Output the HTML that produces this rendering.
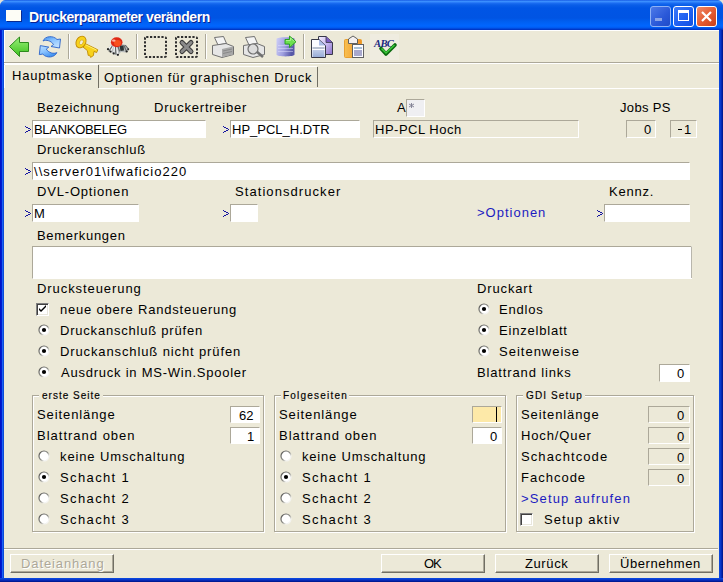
<!DOCTYPE html>
<html><head><meta charset="utf-8"><style>
html,body{margin:0;padding:0;width:723px;height:582px;overflow:hidden;background:#0831d9}
.win{position:absolute;left:0;top:0;width:723px;height:582px;overflow:hidden}
.t{position:absolute;font-family:"Liberation Sans",sans-serif;white-space:pre}
.inp{position:absolute;box-sizing:border-box}
.ico{position:absolute}
.grp{position:absolute;box-sizing:border-box}
.gbg{position:absolute;background:#ECE9D8}
.btn{position:absolute;box-sizing:border-box;background:#ece9d8;border-top:1px solid #fff;border-left:1px solid #fff;border-right:1px solid #716f64;border-bottom:1px solid #716f64;box-shadow:inset -1px -1px 0 #aca899}
</style></head><body><div class="win">
<div style="position:absolute;left:0;top:0;width:723px;height:30px;background:linear-gradient(#0a46dc 0px,#3d95ff 1px,#3788fd 2px,#1c6ef2 3px,#0a5ee8 5px,#0055e5 8px,#0054e3 18px,#0060f2 22px,#0066ff 26px,#0058ee 28px,#003dcf 29px,#0031bd 30px)"></div>
<div style="position:absolute;left:0;top:30px;width:4px;height:552px;background:linear-gradient(90deg,#0014c8 0px,#0014c8 1px,#001cd0 1px,#001cd0 2px,#1a62f4 2px,#1a62f4 3px,#0c4ad8 3px)"></div>
<div style="position:absolute;left:4px;top:88px;width:1px;height:490px;background:#dfe6f6"></div>
<div style="position:absolute;left:719px;top:30px;width:4px;height:552px;background:linear-gradient(90deg,#0a46dc 0px,#0a46dc 1px,#0838cc 1px,#0838cc 2px,#0628b4 2px,#0628b4 3px,#001a94 3px)"></div>
<div style="position:absolute;left:0;top:578px;width:723px;height:4px;background:linear-gradient(#0a46dc 0px,#0a46dc 1px,#0838cc 1px,#0838cc 2px,#0628b4 2px,#0628b4 3px,#001a94 3px)"></div>
<div style="position:absolute;left:718px;top:30px;width:1px;height:548px;background:#d8e0f0"></div>
<div style="position:absolute;left:4px;top:577px;width:715px;height:1px;background:#d8e0f0"></div>
<div style="position:absolute;left:4px;top:30px;width:715px;height:548px;background:#ECE9D8"></div>
<!-- rounded top corners -->
<svg class="ico" style="left:0;top:0" width="6" height="6" viewBox="0 0 6 6"><path d="M0,0 H5 C2.5,0.3 0.3,2.5 0,5 Z" fill="#e4e2d8"/></svg>
<svg class="ico" style="left:717px;top:0" width="6" height="6" viewBox="0 0 6 6"><path d="M6,0 H1 C3.5,0.3 5.7,2.5 6,5 Z" fill="#e4e2d8"/></svg>
<!-- title icon -->
<div style="position:absolute;left:6px;top:10px;width:15px;height:11px;background:#fdfdf6;box-shadow:1px 1px 0 #0a2a90"></div>
<!-- title buttons -->
<div style="position:absolute;left:650px;top:6px;width:21px;height:21px;box-sizing:border-box;border:1px solid #8fb2f6;border-radius:3px;background:linear-gradient(135deg,#4d7ae8,#2a58d8 60%,#1f4bc8)"></div>
<div style="position:absolute;left:655px;top:18px;width:7px;height:3px;background:#8aa4e8"></div>
<div style="position:absolute;left:673px;top:6px;width:21px;height:21px;box-sizing:border-box;border:1px solid #fff;border-radius:3px;background:linear-gradient(135deg,#3c7af8,#1d5ef0 60%,#1050e0)"></div>
<div style="position:absolute;left:678px;top:10px;width:11px;height:11px;box-sizing:border-box;border:1px solid #fff;border-top:3px solid #fff"></div>
<div style="position:absolute;left:696px;top:6px;width:21px;height:21px;box-sizing:border-box;border:1px solid #fff;border-radius:3px;background:linear-gradient(135deg,#f08a68,#e35a30 55%,#c8401a)"></div>
<svg style="position:absolute;left:696px;top:6px" width="21" height="21" viewBox="0 0 21 21"><path d="M6,6 L15,15 M15,6 L6,15" stroke="#fff" stroke-width="2.2"/></svg>
<!-- toolbar -->
<div style="position:absolute;left:4px;top:30px;width:715px;height:1px;background:#fff"></div>
<div style="position:absolute;left:4px;top:30px;width:1px;height:32px;background:#fff"></div>
<div style="position:absolute;left:4px;top:62px;width:715px;height:1px;background:#aca899"></div>
<div style="position:absolute;left:4px;top:63px;width:715px;height:1px;background:#fff"></div>
<div style="position:absolute;left:68px;top:34px;width:1px;height:25px;background:#aca899"></div>
<div style="position:absolute;left:69px;top:34px;width:1px;height:25px;background:#fff"></div>
<div style="position:absolute;left:136px;top:34px;width:1px;height:25px;background:#aca899"></div>
<div style="position:absolute;left:137px;top:34px;width:1px;height:25px;background:#fff"></div>
<div style="position:absolute;left:205px;top:34px;width:1px;height:25px;background:#aca899"></div>
<div style="position:absolute;left:206px;top:34px;width:1px;height:25px;background:#fff"></div>
<div style="position:absolute;left:303px;top:34px;width:1px;height:25px;background:#aca899"></div>
<div style="position:absolute;left:304px;top:34px;width:1px;height:25px;background:#fff"></div>
<!-- back arrow -->
<svg class="ico" style="left:8px;top:36px" width="22" height="22" viewBox="0 0 22 22">
<defs><linearGradient id="ga" x1="0" y1="0" x2="0" y2="1"><stop offset="0" stop-color="#9af07a"/><stop offset="1" stop-color="#3cc01c"/></linearGradient></defs>
<path d="M1.5,10.5 L11.5,1 V6.5 H20.5 V15.5 H11.5 V20.5 Z" fill="url(#ga)" stroke="#2e8a1e" stroke-width="1"/></svg>
<!-- refresh -->
<svg class="ico" style="left:36px;top:34px" width="28" height="26" viewBox="0 0 28 26">
<defs><linearGradient id="gb" x1="0" y1="0" x2="0.6" y2="1"><stop offset="0" stop-color="#3b8ef0"/><stop offset="0.5" stop-color="#8cc4ff"/><stop offset="1" stop-color="#bfe0ff"/></linearGradient>
<linearGradient id="gb2" x1="0" y1="0" x2="0.6" y2="1"><stop offset="0" stop-color="#bfe0ff"/><stop offset="0.5" stop-color="#8cc4ff"/><stop offset="1" stop-color="#3b8ef0"/></linearGradient></defs>
<path d="M7,7 C9,2 17,1 21,5.5 L24.5,5 L23.5,14 L15,12.5 L17.5,10.5 C15,6.5 10,5.5 7,7 Z" fill="url(#gb)" stroke="#2a62c8" stroke-width="0.9" stroke-linejoin="round"/>
<path d="M20.8,18.6 C18.8,23.6 10.8,24.6 6.8,20.1 L3.3,20.6 L4.3,11.6 L12.8,13.1 L10.3,15.1 C12.8,19.1 17.8,20.1 20.8,18.6 Z" fill="url(#gb2)" stroke="#2a62c8" stroke-width="0.9" stroke-linejoin="round"/></svg>
<!-- key -->
<svg class="ico" style="left:72px;top:33px" width="28" height="27" viewBox="0 0 28 27">
<path d="M12,10 L25.8,16.8 L24.6,19.6 L22,18.4 L21.4,22.6 L18.6,24.4 L17.6,22.2 L16.2,22.4 L15.4,17.6 L11,14 Z" fill="#f8d21c" stroke="#c08a00" stroke-width="0.9" stroke-linejoin="round"/>
<path d="M13,11.5 L24.5,17" stroke="#fff27a" stroke-width="0.9"/>
<ellipse cx="9" cy="9" rx="4.7" ry="6.2" transform="rotate(28 9 9)" fill="#f8d21c" stroke="#c08a00" stroke-width="0.9"/>
<ellipse cx="9.4" cy="9.3" rx="1.7" ry="2.6" transform="rotate(28 9.4 9.3)" fill="#f2eed8" stroke="#d0a010" stroke-width="0.6"/></svg>
<!-- spider -->
<svg class="ico" style="left:104px;top:33px" width="28" height="27" viewBox="0 0 28 27">
<path d="M6,13 C4,15 3.5,16 4,17 L7,19 L9,21 L13.5,22.5 L17,19 L22,19.5 L25,17 L22,12 L18,11 L9,11 Z" fill="#b8bcbc"/>
<path d="M7,13 L4,16.5 M9,13 L6.5,18.5 M10.5,13.5 L9.8,20.5 M12.5,14 L13.8,22" stroke="#f4f4f4" stroke-width="1.3" stroke-linecap="round"/>
<path d="M8,13.5 L5,18 M11.5,14 L11.8,21 M14,13.5 L15.5,18 M20,12.5 L22.5,18.5 M21.5,12.5 L24.5,16" stroke="#606666" stroke-width="1.1" stroke-linecap="round"/>
<path d="M15.5,12.5 L19.5,12.5 L20,17.5 L16.5,18 Z" fill="#2c3434"/>
<circle cx="4" cy="16.2" r="1.1" fill="#202020"/><circle cx="6.5" cy="18.6" r="1.1" fill="#202020"/><circle cx="9.7" cy="20.4" r="1.1" fill="#202020"/><circle cx="13.9" cy="21.8" r="1.1" fill="#202020"/><circle cx="22.7" cy="18.5" r="1.1" fill="#202020"/><circle cx="24.2" cy="16.2" r="1" fill="#303030"/>
<ellipse cx="12.7" cy="9.3" rx="5.8" ry="5" fill="#e02814"/>
<ellipse cx="13.5" cy="10" rx="3.6" ry="3.1" fill="#ff5a1e" opacity="0.8"/>
<ellipse cx="9.8" cy="7.6" rx="1.8" ry="1.2" fill="#ffc0b0" opacity="0.9"/></svg>
<!-- dotted squares -->
<svg class="ico" style="left:143px;top:35px" width="25" height="24" viewBox="0 0 25 24"><rect x="2" y="2" width="21" height="20" rx="1.2" fill="none" stroke="#303030" stroke-width="2" stroke-dasharray="2.2 1.6"/></svg>
<svg class="ico" style="left:174px;top:35px" width="25" height="24" viewBox="0 0 25 24"><rect x="2" y="2" width="21" height="20" rx="1.2" fill="none" stroke="#303030" stroke-width="2" stroke-dasharray="2.2 1.6"/>
<path d="M8,7.5 L17,16.5 M17,7.5 L8,16.5" stroke="#3a3a3a" stroke-width="5" stroke-linecap="round"/><path d="M8,7.5 L17,16.5 M17,7.5 L8,16.5" stroke="#8a8a8a" stroke-width="3" stroke-linecap="round"/></svg>
<!-- printer -->
<svg class="ico" style="left:211px;top:35px" width="24" height="24" viewBox="0 0 24 24">
<path d="M3.5,2.5 L12.5,1.5 L15.5,8.5 L7,10 Z" fill="#f4f4f4" stroke="#707070" stroke-width="1"/>
<path d="M1.5,10.5 L15,8.5 L22.5,11.5 L22.5,19.5 L11,22.5 L1.5,19.5 Z" fill="#e6e6e6" stroke="#707070" stroke-width="1"/>
<path d="M11,14 L22,11.5 L22,19.5 L11,22 Z" fill="#a8a8a8"/><path d="M12,16 L21,14 M12,18.5 L21,16.5" stroke="#808080" stroke-width="0.8"/></svg>
<!-- printer preview -->
<svg class="ico" style="left:242px;top:35px" width="24" height="24" viewBox="0 0 24 24">
<path d="M3.5,2.5 L12.5,1.5 L15.5,8.5 L7,10 Z" fill="#f4f4f4" stroke="#707070" stroke-width="1"/>
<path d="M1.5,10.5 L15,8.5 L22.5,11.5 L22.5,19.5 L11,22.5 L1.5,19.5 Z" fill="#e6e6e6" stroke="#707070" stroke-width="1"/>
<path d="M14,16 L21,22" stroke="#707070" stroke-width="2.5"/>
<circle cx="11" cy="14" r="5" fill="#dcdcdc" stroke="#707070" stroke-width="1.2"/></svg>
<!-- database -->
<svg class="ico" style="left:275px;top:35px" width="23" height="23" viewBox="0 0 23 23">
<defs><linearGradient id="gd" x1="0" y1="0" x2="1" y2="0.3"><stop offset="0" stop-color="#d0d0f8"/><stop offset="0.55" stop-color="#a0a0e0"/><stop offset="1" stop-color="#5858a8"/></linearGradient></defs>
<path d="M1.5,4 C1.5,1.8 19.5,1.8 19.5,4 V19.5 C19.5,22 1.5,22 1.5,19.5 Z" fill="url(#gd)"/>
<path d="M3,10.5 H18 M3,13.5 H18 M3,16.5 H18" stroke="#e4e4ff" stroke-width="0.8" opacity="0.6"/>
<path d="M10,4.5 H14.5 V1 L21,6.8 L14.5,12.6 V9 H10 Z" fill="#6ee050" stroke="#24a018" stroke-width="0.9" stroke-linejoin="round"/>
<path d="M11,5.5 H15.5 V3 L19.5,6.5" stroke="#b8f8a0" stroke-width="0.8" fill="none"/></svg>
<!-- copy -->
<svg class="ico" style="left:305px;top:33px" width="32" height="27" viewBox="0 0 32 27">
<defs><linearGradient id="gc1" x1="0" y1="0" x2="1" y2="1"><stop offset="0" stop-color="#f4f0ff"/><stop offset="0.5" stop-color="#c8b8f0"/><stop offset="1" stop-color="#8a70c8"/></linearGradient>
<linearGradient id="gc2" x1="0" y1="0" x2="0" y2="1"><stop offset="0" stop-color="#c0cce8"/><stop offset="1" stop-color="#98acd8"/></linearGradient></defs>
<path d="M13.5,3.5 H21 L27.5,9.5 V21.5 H13.5 Z" fill="url(#gc1)" stroke="#383848" stroke-width="1"/>
<path d="M21,3.5 V9.5 H27.5" fill="#7a5cc0" stroke="#383848" stroke-width="0.8"/>
<path d="M6.5,6.5 H14 L20.5,12.5 V24.5 H6.5 Z" fill="#fbfbff" stroke="#383848" stroke-width="1"/>
<rect x="7.5" y="14" width="12" height="2" fill="#b8c0d0"/>
<rect x="7.5" y="17" width="12" height="7" fill="url(#gc2)"/>
<path d="M14,6.5 L20.5,12.5 L14,12.5 Z" fill="#9aaee0" opacity="0.8"/></svg>
<!-- paste -->
<svg class="ico" style="left:338px;top:33px" width="32" height="27" viewBox="0 0 32 27">
<defs><linearGradient id="gp" x1="0" y1="0" x2="1" y2="0"><stop offset="0" stop-color="#f8c050"/><stop offset="1" stop-color="#f09020"/></linearGradient></defs>
<rect x="6.5" y="6.5" width="17" height="18" rx="1" fill="url(#gp)" stroke="#e8a030" stroke-width="1"/>
<path d="M10.5,10.5 V6 L15,3 L19.5,6 V10.5 Z" fill="#f4f0f0" stroke="#606060" stroke-width="1" stroke-linejoin="round"/>
<rect x="14.5" y="11.5" width="11" height="13" fill="#fcfcff" stroke="#606060" stroke-width="1"/>
<rect x="16" y="14" width="8" height="2" fill="#a8c0d8"/>
<rect x="16" y="17" width="8" height="6" fill="#a8a8cc"/></svg>
<!-- abc -->
<div style="position:absolute;left:370px;top:34px;width:29px;height:26px;background:#efece0"></div>
<div style="position:absolute;left:374px;top:38px;font-family:'Liberation Serif',serif;font-weight:bold;font-style:italic;font-size:10.5px;line-height:11px;color:#1c2a80;letter-spacing:-0.6px">ABC</div>
<svg class="ico" style="left:378px;top:42px" width="20" height="16" viewBox="0 0 20 16"><path d="M3,6.5 L8,12 L17,3" stroke="#0c6c10" stroke-width="3.6" fill="none" stroke-linejoin="round" stroke-linecap="round"/><path d="M3.5,6.5 L8,11 L16.5,3" stroke="#3cc83c" stroke-width="1.6" fill="none"/></svg>
<!-- tabs -->
<div style="position:absolute;left:4px;top:88px;width:715px;height:1px;background:#fff"></div>
<div style="position:absolute;left:99px;top:66px;width:219px;height:22px;background:#ECE9D8"></div>
<div style="position:absolute;left:100px;top:66px;width:217px;height:1px;background:#fff"></div>
<div style="position:absolute;left:317px;top:67px;width:1px;height:20px;background:#716f64"></div>
<div style="position:absolute;left:4px;top:64px;width:95px;height:25px;background:#ECE9D8"></div>
<div style="position:absolute;left:5px;top:64px;width:93px;height:1px;background:#fff"></div>
<div style="position:absolute;left:4px;top:65px;width:1px;height:23px;background:#fff"></div>
<div style="position:absolute;left:98px;top:65px;width:1px;height:23px;background:#716f64"></div>

<svg class="ico" style="left:25px;top:126px" width="6" height="7" viewBox="0 0 6 7" shape-rendering="crispEdges"><path d="M0,0h1v1h-1z M1,1h2v1h-2z M3,2h2v1h-2z M5,3h1v1h-1z M3,4h2v1h-2z M1,5h2v1h-2z M0,6h1v1h-1z" fill="#1414a0"/></svg><div class="inp" style="left:32px;top:120px;width:174px;height:18px;background:#fff;border-top:1px solid #aca899;border-left:1px solid #aca899;border-right:1px solid #fff;border-bottom:1px solid #fff"></div><svg class="ico" style="left:223px;top:126px" width="6" height="7" viewBox="0 0 6 7" shape-rendering="crispEdges"><path d="M0,0h1v1h-1z M1,1h2v1h-2z M3,2h2v1h-2z M5,3h1v1h-1z M3,4h2v1h-2z M1,5h2v1h-2z M0,6h1v1h-1z" fill="#1414a0"/></svg><div class="inp" style="left:230px;top:120px;width:130px;height:18px;background:#fff;border-top:1px solid #aca899;border-left:1px solid #aca899;border-right:1px solid #fff;border-bottom:1px solid #fff"></div><div class="inp" style="left:406px;top:99px;width:19px;height:18px;background:#efeff2;border-top:1px solid #aca899;border-left:1px solid #aca899;border-right:1px solid #fff;border-bottom:1px solid #fff"></div><svg class="ico" style="left:409px;top:103px" width="5" height="5" viewBox="0 0 5 5"><path d="M2.5,0 V5 M0,1 L5,4 M0,4 L5,1" stroke="#7c7c90" stroke-width="0.9"/></svg><div class="inp" style="left:373px;top:120px;width:206px;height:18px;background:#ECE9D8;border-top:1px solid #aca899;border-left:1px solid #aca899;border-right:1px solid #fff;border-bottom:1px solid #fff"></div><div class="inp" style="left:626px;top:120px;width:30px;height:18px;background:#ECE9D8;border-top:1px solid #aca899;border-left:1px solid #aca899;border-right:1px solid #fff;border-bottom:1px solid #fff"></div><div class="inp" style="left:670px;top:120px;width:27px;height:18px;background:#ECE9D8;border-top:1px solid #aca899;border-left:1px solid #aca899;border-right:1px solid #fff;border-bottom:1px solid #fff"></div><div style="position:absolute;left:678px;top:129px;width:4px;height:1px;background:#000"></div><svg class="ico" style="left:25px;top:168px" width="6" height="7" viewBox="0 0 6 7" shape-rendering="crispEdges"><path d="M0,0h1v1h-1z M1,1h2v1h-2z M3,2h2v1h-2z M5,3h1v1h-1z M3,4h2v1h-2z M1,5h2v1h-2z M0,6h1v1h-1z" fill="#1414a0"/></svg><div class="inp" style="left:32px;top:162px;width:658px;height:18px;background:#fff;border-top:1px solid #aca899;border-left:1px solid #aca899;border-right:1px solid #fff;border-bottom:1px solid #fff"></div><svg class="ico" style="left:25px;top:210px" width="6" height="7" viewBox="0 0 6 7" shape-rendering="crispEdges"><path d="M0,0h1v1h-1z M1,1h2v1h-2z M3,2h2v1h-2z M5,3h1v1h-1z M3,4h2v1h-2z M1,5h2v1h-2z M0,6h1v1h-1z" fill="#1414a0"/></svg><div class="inp" style="left:32px;top:204px;width:107px;height:18px;background:#fff;border-top:1px solid #aca899;border-left:1px solid #aca899;border-right:1px solid #fff;border-bottom:1px solid #fff"></div><svg class="ico" style="left:223px;top:210px" width="6" height="7" viewBox="0 0 6 7" shape-rendering="crispEdges"><path d="M0,0h1v1h-1z M1,1h2v1h-2z M3,2h2v1h-2z M5,3h1v1h-1z M3,4h2v1h-2z M1,5h2v1h-2z M0,6h1v1h-1z" fill="#1414a0"/></svg><div class="inp" style="left:230px;top:204px;width:28px;height:18px;background:#fff;border-top:1px solid #aca899;border-left:1px solid #aca899;border-right:1px solid #fff;border-bottom:1px solid #fff"></div><svg class="ico" style="left:597px;top:210px" width="6" height="7" viewBox="0 0 6 7" shape-rendering="crispEdges"><path d="M0,0h1v1h-1z M1,1h2v1h-2z M3,2h2v1h-2z M5,3h1v1h-1z M3,4h2v1h-2z M1,5h2v1h-2z M0,6h1v1h-1z" fill="#1414a0"/></svg><div class="inp" style="left:604px;top:204px;width:86px;height:18px;background:#fff;border-top:1px solid #aca899;border-left:1px solid #aca899;border-right:1px solid #fff;border-bottom:1px solid #fff"></div><div class="inp" style="left:32px;top:246px;width:660px;height:33px;background:#fff;border-top:1px solid #aca899;border-left:1px solid #aca899;border-right:1px solid #fff;border-bottom:1px solid #fff"></div><div style="position:absolute;left:691px;top:247px;width:1px;height:31px;background:#b8b6ac"></div><div class="ico" style="left:36px;top:303px;width:13px;height:13px;box-sizing:border-box;background:#fff;border-top:1px solid #808080;border-left:1px solid #808080;border-right:1px solid #fff;border-bottom:1px solid #fff;box-shadow:inset 1px 1px 0 #404040, inset -1px -1px 0 #e8e6dc"></div><svg class="ico" style="left:36px;top:303px" width="13" height="13" viewBox="0 0 13 13"><path d="M3,5 L3,7 L5,9 L10,4 L10,2 L5,7 Z" fill="#000"/></svg><svg class="ico" style="left:38px;top:324px" width="12" height="12" viewBox="0 0 12 12"><defs><linearGradient id="rg38_324" x1="0" y1="0" x2="1" y2="1"><stop offset="0" stop-color="#4a4a4a"/><stop offset="0.5" stop-color="#8c8c86"/><stop offset="0.72" stop-color="#f0f0ec"/><stop offset="1" stop-color="#ffffff"/></linearGradient></defs><circle cx="6" cy="6" r="5.6" fill="url(#rg38_324)"/><circle cx="6" cy="6" r="4.4" fill="#fff"/><circle cx="6" cy="6" r="2.1" fill="#000"/></svg><svg class="ico" style="left:38px;top:345px" width="12" height="12" viewBox="0 0 12 12"><defs><linearGradient id="rg38_345" x1="0" y1="0" x2="1" y2="1"><stop offset="0" stop-color="#4a4a4a"/><stop offset="0.5" stop-color="#8c8c86"/><stop offset="0.72" stop-color="#f0f0ec"/><stop offset="1" stop-color="#ffffff"/></linearGradient></defs><circle cx="6" cy="6" r="5.6" fill="url(#rg38_345)"/><circle cx="6" cy="6" r="4.4" fill="#fff"/><circle cx="6" cy="6" r="2.1" fill="#000"/></svg><svg class="ico" style="left:38px;top:366px" width="12" height="12" viewBox="0 0 12 12"><defs><linearGradient id="rg38_366" x1="0" y1="0" x2="1" y2="1"><stop offset="0" stop-color="#4a4a4a"/><stop offset="0.5" stop-color="#8c8c86"/><stop offset="0.72" stop-color="#f0f0ec"/><stop offset="1" stop-color="#ffffff"/></linearGradient></defs><circle cx="6" cy="6" r="5.6" fill="url(#rg38_366)"/><circle cx="6" cy="6" r="4.4" fill="#fff"/><circle cx="6" cy="6" r="2.1" fill="#000"/></svg><svg class="ico" style="left:478px;top:303px" width="12" height="12" viewBox="0 0 12 12"><defs><linearGradient id="rg478_303" x1="0" y1="0" x2="1" y2="1"><stop offset="0" stop-color="#4a4a4a"/><stop offset="0.5" stop-color="#8c8c86"/><stop offset="0.72" stop-color="#f0f0ec"/><stop offset="1" stop-color="#ffffff"/></linearGradient></defs><circle cx="6" cy="6" r="5.6" fill="url(#rg478_303)"/><circle cx="6" cy="6" r="4.4" fill="#fff"/><circle cx="6" cy="6" r="2.1" fill="#000"/></svg><svg class="ico" style="left:478px;top:324px" width="12" height="12" viewBox="0 0 12 12"><defs><linearGradient id="rg478_324" x1="0" y1="0" x2="1" y2="1"><stop offset="0" stop-color="#4a4a4a"/><stop offset="0.5" stop-color="#8c8c86"/><stop offset="0.72" stop-color="#f0f0ec"/><stop offset="1" stop-color="#ffffff"/></linearGradient></defs><circle cx="6" cy="6" r="5.6" fill="url(#rg478_324)"/><circle cx="6" cy="6" r="4.4" fill="#fff"/><circle cx="6" cy="6" r="2.1" fill="#000"/></svg><svg class="ico" style="left:478px;top:345px" width="12" height="12" viewBox="0 0 12 12"><defs><linearGradient id="rg478_345" x1="0" y1="0" x2="1" y2="1"><stop offset="0" stop-color="#4a4a4a"/><stop offset="0.5" stop-color="#8c8c86"/><stop offset="0.72" stop-color="#f0f0ec"/><stop offset="1" stop-color="#ffffff"/></linearGradient></defs><circle cx="6" cy="6" r="5.6" fill="url(#rg478_345)"/><circle cx="6" cy="6" r="4.4" fill="#fff"/><circle cx="6" cy="6" r="2.1" fill="#000"/></svg><div class="inp" style="left:659px;top:364px;width:31px;height:18px;background:#fff;border-top:1px solid #aca899;border-left:1px solid #aca899;border-right:1px solid #fff;border-bottom:1px solid #fff"></div><div class="grp" style="left:33px;top:396px;width:232px;height:137px;border:1px solid #fff"></div><div class="grp" style="left:32px;top:395px;width:232px;height:137px;border:1px solid #aca899"></div><div class="gbg" style="left:39px;top:391px;width:64px;height:8px"></div><div class="grp" style="left:275px;top:396px;width:232px;height:137px;border:1px solid #fff"></div><div class="grp" style="left:274px;top:395px;width:232px;height:137px;border:1px solid #aca899"></div><div class="gbg" style="left:281px;top:391px;width:68px;height:8px"></div><div class="grp" style="left:517px;top:396px;width:178px;height:137px;border:1px solid #fff"></div><div class="grp" style="left:516px;top:395px;width:178px;height:137px;border:1px solid #aca899"></div><div class="gbg" style="left:523px;top:391px;width:62px;height:8px"></div><div class="inp" style="left:230px;top:406px;width:30px;height:17px;background:#fff;border-top:1px solid #aca899;border-left:1px solid #aca899;border-right:1px solid #fff;border-bottom:1px solid #fff"></div><div class="inp" style="left:230px;top:427px;width:30px;height:17px;background:#fff;border-top:1px solid #aca899;border-left:1px solid #aca899;border-right:1px solid #fff;border-bottom:1px solid #fff"></div><svg class="ico" style="left:38px;top:450px" width="12" height="12" viewBox="0 0 12 12"><defs><linearGradient id="rg38_450" x1="0" y1="0" x2="1" y2="1"><stop offset="0" stop-color="#4a4a4a"/><stop offset="0.5" stop-color="#8c8c86"/><stop offset="0.72" stop-color="#f0f0ec"/><stop offset="1" stop-color="#ffffff"/></linearGradient></defs><circle cx="6" cy="6" r="5.6" fill="url(#rg38_450)"/><circle cx="6" cy="6" r="4.4" fill="#fff"/></svg><svg class="ico" style="left:38px;top:471px" width="12" height="12" viewBox="0 0 12 12"><defs><linearGradient id="rg38_471" x1="0" y1="0" x2="1" y2="1"><stop offset="0" stop-color="#4a4a4a"/><stop offset="0.5" stop-color="#8c8c86"/><stop offset="0.72" stop-color="#f0f0ec"/><stop offset="1" stop-color="#ffffff"/></linearGradient></defs><circle cx="6" cy="6" r="5.6" fill="url(#rg38_471)"/><circle cx="6" cy="6" r="4.4" fill="#fff"/><circle cx="6" cy="6" r="2.1" fill="#000"/></svg><svg class="ico" style="left:38px;top:492px" width="12" height="12" viewBox="0 0 12 12"><defs><linearGradient id="rg38_492" x1="0" y1="0" x2="1" y2="1"><stop offset="0" stop-color="#4a4a4a"/><stop offset="0.5" stop-color="#8c8c86"/><stop offset="0.72" stop-color="#f0f0ec"/><stop offset="1" stop-color="#ffffff"/></linearGradient></defs><circle cx="6" cy="6" r="5.6" fill="url(#rg38_492)"/><circle cx="6" cy="6" r="4.4" fill="#fff"/></svg><svg class="ico" style="left:38px;top:513px" width="12" height="12" viewBox="0 0 12 12"><defs><linearGradient id="rg38_513" x1="0" y1="0" x2="1" y2="1"><stop offset="0" stop-color="#4a4a4a"/><stop offset="0.5" stop-color="#8c8c86"/><stop offset="0.72" stop-color="#f0f0ec"/><stop offset="1" stop-color="#ffffff"/></linearGradient></defs><circle cx="6" cy="6" r="5.6" fill="url(#rg38_513)"/><circle cx="6" cy="6" r="4.4" fill="#fff"/></svg><div class="inp" style="left:472px;top:406px;width:30px;height:17px;background:#fde9a8;border-top:1px solid #aca899;border-left:1px solid #aca899;border-right:1px solid #fff;border-bottom:1px solid #fff"></div><div style="position:absolute;left:496px;top:407px;width:1px;height:15px;background:#000"></div><div class="inp" style="left:472px;top:427px;width:30px;height:17px;background:#fff;border-top:1px solid #aca899;border-left:1px solid #aca899;border-right:1px solid #fff;border-bottom:1px solid #fff"></div><svg class="ico" style="left:280px;top:450px" width="12" height="12" viewBox="0 0 12 12"><defs><linearGradient id="rg280_450" x1="0" y1="0" x2="1" y2="1"><stop offset="0" stop-color="#4a4a4a"/><stop offset="0.5" stop-color="#8c8c86"/><stop offset="0.72" stop-color="#f0f0ec"/><stop offset="1" stop-color="#ffffff"/></linearGradient></defs><circle cx="6" cy="6" r="5.6" fill="url(#rg280_450)"/><circle cx="6" cy="6" r="4.4" fill="#fff"/></svg><svg class="ico" style="left:280px;top:471px" width="12" height="12" viewBox="0 0 12 12"><defs><linearGradient id="rg280_471" x1="0" y1="0" x2="1" y2="1"><stop offset="0" stop-color="#4a4a4a"/><stop offset="0.5" stop-color="#8c8c86"/><stop offset="0.72" stop-color="#f0f0ec"/><stop offset="1" stop-color="#ffffff"/></linearGradient></defs><circle cx="6" cy="6" r="5.6" fill="url(#rg280_471)"/><circle cx="6" cy="6" r="4.4" fill="#fff"/><circle cx="6" cy="6" r="2.1" fill="#000"/></svg><svg class="ico" style="left:280px;top:492px" width="12" height="12" viewBox="0 0 12 12"><defs><linearGradient id="rg280_492" x1="0" y1="0" x2="1" y2="1"><stop offset="0" stop-color="#4a4a4a"/><stop offset="0.5" stop-color="#8c8c86"/><stop offset="0.72" stop-color="#f0f0ec"/><stop offset="1" stop-color="#ffffff"/></linearGradient></defs><circle cx="6" cy="6" r="5.6" fill="url(#rg280_492)"/><circle cx="6" cy="6" r="4.4" fill="#fff"/></svg><svg class="ico" style="left:280px;top:513px" width="12" height="12" viewBox="0 0 12 12"><defs><linearGradient id="rg280_513" x1="0" y1="0" x2="1" y2="1"><stop offset="0" stop-color="#4a4a4a"/><stop offset="0.5" stop-color="#8c8c86"/><stop offset="0.72" stop-color="#f0f0ec"/><stop offset="1" stop-color="#ffffff"/></linearGradient></defs><circle cx="6" cy="6" r="5.6" fill="url(#rg280_513)"/><circle cx="6" cy="6" r="4.4" fill="#fff"/></svg><div class="inp" style="left:648px;top:406px;width:42px;height:17px;background:#ECE9D8;border-top:1px solid #aca899;border-left:1px solid #aca899;border-right:1px solid #fff;border-bottom:1px solid #fff"></div><div class="inp" style="left:648px;top:427px;width:42px;height:17px;background:#ECE9D8;border-top:1px solid #aca899;border-left:1px solid #aca899;border-right:1px solid #fff;border-bottom:1px solid #fff"></div><div class="inp" style="left:648px;top:448px;width:42px;height:17px;background:#ECE9D8;border-top:1px solid #aca899;border-left:1px solid #aca899;border-right:1px solid #fff;border-bottom:1px solid #fff"></div><div class="inp" style="left:648px;top:469px;width:42px;height:17px;background:#ECE9D8;border-top:1px solid #aca899;border-left:1px solid #aca899;border-right:1px solid #fff;border-bottom:1px solid #fff"></div><div class="ico" style="left:520px;top:513px;width:13px;height:13px;box-sizing:border-box;background:#fff;border-top:1px solid #808080;border-left:1px solid #808080;border-right:1px solid #fff;border-bottom:1px solid #fff;box-shadow:inset 1px 1px 0 #404040, inset -1px -1px 0 #e8e6dc"></div><svg class="ico" style="left:520px;top:513px" width="13" height="13" viewBox="0 0 13 13"></svg><div style="position:absolute;left:4px;top:548px;width:714px;height:1px;background:#aca899"></div><div style="position:absolute;left:4px;top:549px;width:714px;height:1px;background:#fff"></div><div class="btn" style="left:10px;top:554px;width:104px;height:19px"></div><div class="btn" style="left:381px;top:554px;width:104px;height:19px"></div><div class="btn" style="left:495px;top:554px;width:104px;height:19px"></div><div class="btn" style="left:609px;top:554px;width:104px;height:19px"></div>
<div class="t" style="left:29px;top:9px;font-size:14px;line-height:16px;font-weight:bold;color:#fff;letter-spacing:-0.440px;text-shadow:1px 1px 0 #0a2290;">Druckerparameter verändern</div>
<div class="t" style="left:12px;top:68px;font-size:13px;line-height:15px;font-weight:normal;color:#000;letter-spacing:0.778px;">Hauptmaske</div>
<div class="t" style="left:104px;top:70px;font-size:13px;line-height:15px;font-weight:normal;color:#000;letter-spacing:0.828px;">Optionen für graphischen Druck</div>
<div class="t" style="left:37px;top:100px;font-size:13px;line-height:15px;font-weight:normal;color:#000;letter-spacing:0.700px;">Bezeichnung</div>
<div class="t" style="left:154px;top:100px;font-size:13px;line-height:15px;font-weight:normal;color:#000;letter-spacing:0.769px;">Druckertreiber</div>
<div class="t" style="left:397px;top:100px;font-size:13px;line-height:15px;font-weight:normal;color:#000;letter-spacing:0.000px;">A</div>
<div class="t" style="left:620px;top:100px;font-size:13px;line-height:15px;font-weight:normal;color:#000;letter-spacing:0.333px;">Jobs PS</div>
<div class="t" style="left:34px;top:122px;font-size:13px;line-height:15px;font-weight:normal;color:#000;letter-spacing:-0.300px;">BLANKOBELEG</div>
<div class="t" style="left:232px;top:122px;font-size:13px;line-height:15px;font-weight:normal;color:#000;letter-spacing:0.000px;">HP_PCL_H.DTR</div>
<div class="t" style="left:375px;top:122px;font-size:13px;line-height:15px;font-weight:normal;color:#000;letter-spacing:0.500px;">HP-PCL Hoch</div>
<div class="t" style="left:644px;top:122px;font-size:13px;line-height:15px;font-weight:normal;color:#000;letter-spacing:0.000px;">0</div>
<div class="t" style="left:684px;top:122px;font-size:13px;line-height:15px;font-weight:normal;color:#000;letter-spacing:0.000px;">1</div>
<div class="t" style="left:37px;top:142px;font-size:13px;line-height:15px;font-weight:normal;color:#000;letter-spacing:0.714px;">Druckeranschluß</div>
<div class="t" style="left:34px;top:164px;font-size:13px;line-height:15px;font-weight:normal;color:#000;letter-spacing:1.045px;">\\server01\ifwaficio220</div>
<div class="t" style="left:37px;top:184px;font-size:13px;line-height:15px;font-weight:normal;color:#000;letter-spacing:0.818px;">DVL-Optionen</div>
<div class="t" style="left:235px;top:184px;font-size:13px;line-height:15px;font-weight:normal;color:#000;letter-spacing:1.071px;">Stationsdrucker</div>
<div class="t" style="left:609px;top:184px;font-size:13px;line-height:15px;font-weight:normal;color:#000;letter-spacing:0.800px;">Kennz.</div>
<div class="t" style="left:34px;top:206px;font-size:13px;line-height:15px;font-weight:normal;color:#000;letter-spacing:0.000px;">M</div>
<div class="t" style="left:477px;top:205px;font-size:13px;line-height:15px;font-weight:normal;color:#1c1cc0;letter-spacing:1.000px;">&gt;Optionen</div>
<div class="t" style="left:37px;top:228px;font-size:13px;line-height:15px;font-weight:normal;color:#000;letter-spacing:0.700px;">Bemerkungen</div>
<div class="t" style="left:37px;top:281px;font-size:13px;line-height:15px;font-weight:normal;color:#000;letter-spacing:0.923px;">Drucksteuerung</div>
<div class="t" style="left:477px;top:281px;font-size:13px;line-height:15px;font-weight:normal;color:#000;letter-spacing:0.857px;">Druckart</div>
<div class="t" style="left:60px;top:302px;font-size:13px;line-height:15px;font-weight:normal;color:#000;letter-spacing:0.783px;">neue obere Randsteuerung</div>
<div class="t" style="left:60px;top:323px;font-size:13px;line-height:15px;font-weight:normal;color:#000;letter-spacing:0.789px;">Druckanschluß prüfen</div>
<div class="t" style="left:60px;top:344px;font-size:13px;line-height:15px;font-weight:normal;color:#000;letter-spacing:0.880px;">Druckanschluß nicht prüfen</div>
<div class="t" style="left:61px;top:365px;font-size:13px;line-height:15px;font-weight:normal;color:#000;letter-spacing:0.760px;">Ausdruck in MS-Win.Spooler</div>
<div class="t" style="left:499px;top:302px;font-size:13px;line-height:15px;font-weight:normal;color:#000;letter-spacing:0.800px;">Endlos</div>
<div class="t" style="left:499px;top:323px;font-size:13px;line-height:15px;font-weight:normal;color:#000;letter-spacing:0.800px;">Einzelblatt</div>
<div class="t" style="left:499px;top:344px;font-size:13px;line-height:15px;font-weight:normal;color:#000;letter-spacing:1.000px;">Seitenweise</div>
<div class="t" style="left:477px;top:365px;font-size:13px;line-height:15px;font-weight:normal;color:#000;letter-spacing:0.857px;">Blattrand links</div>
<div class="t" style="left:677px;top:366px;font-size:13px;line-height:15px;font-weight:normal;color:#000;letter-spacing:0.000px;">0</div>
<div class="t" style="left:42px;top:390px;font-size:10px;line-height:12px;font-weight:normal;color:#000;letter-spacing:1.000px;-webkit-text-stroke:0.15px #000;">erste Seite</div>
<div class="t" style="left:283px;top:390px;font-size:10px;line-height:12px;font-weight:normal;color:#000;letter-spacing:1.200px;-webkit-text-stroke:0.15px #000;">Folgeseiten</div>
<div class="t" style="left:526px;top:390px;font-size:10px;line-height:12px;font-weight:normal;color:#000;letter-spacing:1.125px;-webkit-text-stroke:0.15px #000;">GDI Setup</div>
<div class="t" style="left:37px;top:407px;font-size:13px;line-height:15px;font-weight:normal;color:#000;letter-spacing:0.900px;">Seitenlänge</div>
<div class="t" style="left:37px;top:428px;font-size:13px;line-height:15px;font-weight:normal;color:#000;letter-spacing:1.000px;">Blattrand oben</div>
<div class="t" style="left:239px;top:408px;font-size:13px;line-height:15px;font-weight:normal;color:#000;letter-spacing:0.000px;">62</div>
<div class="t" style="left:247px;top:429px;font-size:13px;line-height:15px;font-weight:normal;color:#000;letter-spacing:0.000px;">1</div>
<div class="t" style="left:60px;top:449px;font-size:13px;line-height:15px;font-weight:normal;color:#000;letter-spacing:0.875px;">keine Umschaltung</div>
<div class="t" style="left:60px;top:470px;font-size:13px;line-height:15px;font-weight:normal;color:#000;letter-spacing:1.375px;">Schacht 1</div>
<div class="t" style="left:60px;top:491px;font-size:13px;line-height:15px;font-weight:normal;color:#000;letter-spacing:1.375px;">Schacht 2</div>
<div class="t" style="left:60px;top:512px;font-size:13px;line-height:15px;font-weight:normal;color:#000;letter-spacing:1.375px;">Schacht 3</div>
<div class="t" style="left:279px;top:407px;font-size:13px;line-height:15px;font-weight:normal;color:#000;letter-spacing:0.900px;">Seitenlänge</div>
<div class="t" style="left:279px;top:428px;font-size:13px;line-height:15px;font-weight:normal;color:#000;letter-spacing:1.000px;">Blattrand oben</div>
<div class="t" style="left:490px;top:429px;font-size:13px;line-height:15px;font-weight:normal;color:#000;letter-spacing:0.000px;">0</div>
<div class="t" style="left:302px;top:449px;font-size:13px;line-height:15px;font-weight:normal;color:#000;letter-spacing:0.812px;">keine Umschaltung</div>
<div class="t" style="left:302px;top:470px;font-size:13px;line-height:15px;font-weight:normal;color:#000;letter-spacing:1.375px;">Schacht 1</div>
<div class="t" style="left:302px;top:491px;font-size:13px;line-height:15px;font-weight:normal;color:#000;letter-spacing:1.375px;">Schacht 2</div>
<div class="t" style="left:302px;top:512px;font-size:13px;line-height:15px;font-weight:normal;color:#000;letter-spacing:1.375px;">Schacht 3</div>
<div class="t" style="left:521px;top:407px;font-size:13px;line-height:15px;font-weight:normal;color:#000;letter-spacing:0.900px;">Seitenlänge</div>
<div class="t" style="left:677px;top:408px;font-size:13px;line-height:15px;font-weight:normal;color:#000;letter-spacing:0.000px;">0</div>
<div class="t" style="left:521px;top:428px;font-size:13px;line-height:15px;font-weight:normal;color:#000;letter-spacing:0.875px;">Hoch/Quer</div>
<div class="t" style="left:677px;top:429px;font-size:13px;line-height:15px;font-weight:normal;color:#000;letter-spacing:0.000px;">0</div>
<div class="t" style="left:521px;top:449px;font-size:13px;line-height:15px;font-weight:normal;color:#000;letter-spacing:1.100px;">Schachtcode</div>
<div class="t" style="left:677px;top:450px;font-size:13px;line-height:15px;font-weight:normal;color:#000;letter-spacing:0.000px;">0</div>
<div class="t" style="left:521px;top:470px;font-size:13px;line-height:15px;font-weight:normal;color:#000;letter-spacing:1.000px;">Fachcode</div>
<div class="t" style="left:677px;top:471px;font-size:13px;line-height:15px;font-weight:normal;color:#000;letter-spacing:0.000px;">0</div>
<div class="t" style="left:521px;top:491px;font-size:13px;line-height:15px;font-weight:normal;color:#1c1cc0;letter-spacing:1.143px;">&gt;Setup aufrufen</div>
<div class="t" style="left:544px;top:512px;font-size:13px;line-height:15px;font-weight:normal;color:#000;letter-spacing:1.100px;">Setup aktiv</div>
<div class="t" style="left:21px;top:556px;font-size:13px;line-height:15px;font-weight:normal;color:#aca899;letter-spacing:0.900px;text-shadow:1px 1px 0 #fff;">Dateianhang</div>
<div class="t" style="left:424px;top:556px;font-size:13px;line-height:15px;font-weight:normal;color:#000;letter-spacing:-1.000px;">OK</div>
<div class="t" style="left:525px;top:556px;font-size:13px;line-height:15px;font-weight:normal;color:#000;letter-spacing:0.600px;">Zurück</div>
<div class="t" style="left:620px;top:556px;font-size:13px;line-height:15px;font-weight:normal;color:#000;letter-spacing:0.556px;">Übernehmen</div>
</div></body></html>
